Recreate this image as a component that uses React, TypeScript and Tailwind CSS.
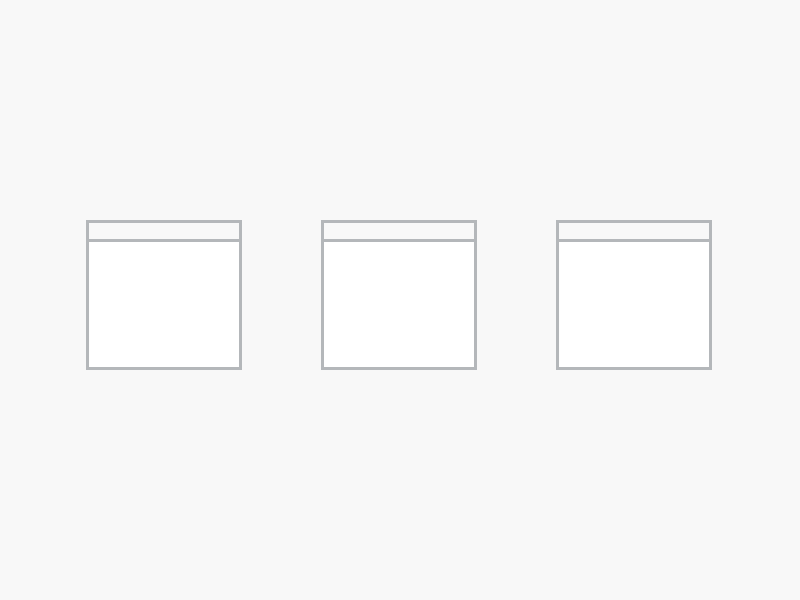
import React from 'react';

const WindowFrame: React.FC = () => (
    <div className="w-[156px] h-[150px] border-[3px] border-[#b4b7ba] bg-white flex flex-col">
        <div className="h-[19px] border-b-[3px] border-[#b4b7ba] bg-[#f8f8f8]" />
        <div className="flex-1 bg-white" />
    </div>
);

const App: React.FC = () => {
    return (
        <div className="w-[800px] h-[600px] bg-[#f8f8f8] pt-[220px] pl-[86px] flex items-start gap-[79px]">
            <WindowFrame />
            <WindowFrame />
            <WindowFrame />
        </div>
    );
};

export default App;
